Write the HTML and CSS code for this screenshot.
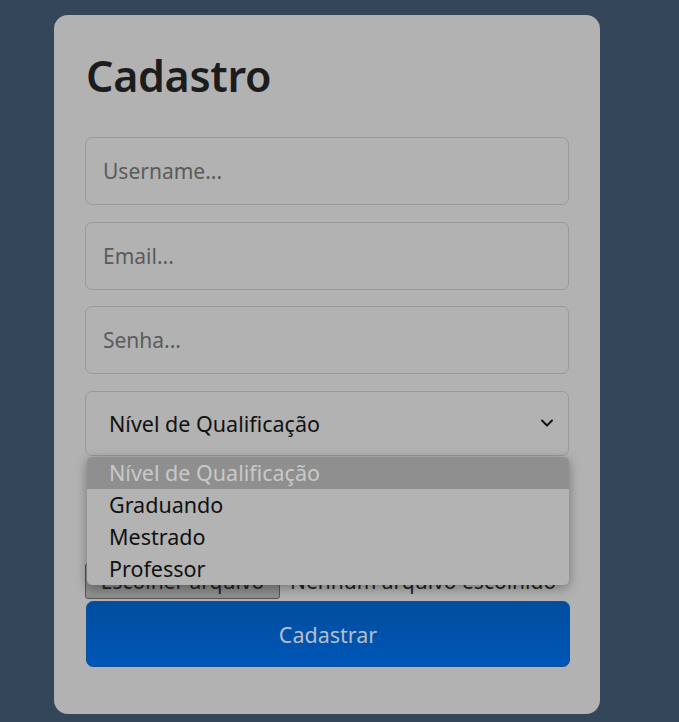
FILE: index.html
```html
<!DOCTYPE html>
<html lang="pt-BR">
<head>
<meta charset="utf-8">
<title>Cadastro</title>
<link rel="stylesheet" href="styles.css">
</head>
<body>
<main class="card">
  <h1 class="title">Cadastro</h1>
  <form class="form">
    <div class="field"><span class="placeholder">Username...</span></div>
    <div class="field"><span class="placeholder">Email...</span></div>
    <div class="field"><span class="placeholder">Senha...</span></div>
    <div class="field select">
      <span class="value">Nível de Qualificação</span>
      <svg class="chevron" width="14" height="10" viewBox="0 0 14 10"><path d="M2 2.5 L7 7.5 L12 2.5" fill="none" stroke="#111" stroke-width="2" stroke-linecap="round" stroke-linejoin="round"/></svg>
    </div>
    <div class="file-row">
      <span class="file-btn">Escolher arquivo</span>
      <span class="file-text">Nenhum arquivo escolhido</span>
    </div>
    <button type="button" class="submit">Cadastrar</button>
  </form>
  <ul class="dropdown">
    <li class="opt disabled">Nível de Qualificação</li>
    <li class="opt">Graduando</li>
    <li class="opt">Mestrado</li>
    <li class="opt">Professor</li>
  </ul>
</main>
</body>
</html>
```

FILE: styles.css
```css
* { box-sizing: border-box; }
html, body { margin: 0; padding: 0; }
body {
  background: #34475a;
  width: 679px;
  height: 722px;
  overflow: hidden;
  font-family: "Noto Sans", "Open Sans", sans-serif;
}
.card {
  position: relative;
  margin: 15px 0 0 54px;
  width: 546px;
  height: 699px;
  background: #b2b2b2;
  border-radius: 14px;
  padding: 31px 31px 0 31px;
}
.title {
  margin: 0 0 17px 1px;
  height: 74px;
  font-size: 43px;
  font-weight: 600;
  line-height: 60px;
  color: #1c1c1c;
  letter-spacing: -0.3px;
}
.form {
  display: flex;
  flex-direction: column;
  gap: 16.5px;
}
.field {
  height: 68px;
  border: 1px solid #999999;
  border-radius: 7px;
  display: flex;
  align-items: center;
  padding: 0 17px;
}
.placeholder {
  font-size: 21px;
  color: #5b5b5b;
}
.select {
  height: 65px;
  padding: 0 14px 0 23px;
  justify-content: space-between;
}
.value {
  font-size: 21.5px;
  color: #111111;
}
.chevron { display: block; }
.file-row {
  margin-top: 91px;
  height: 36px;
  display: flex;
  align-items: center;
  gap: 10px;
  overflow: hidden;
  white-space: nowrap;
}
.file-btn {
  flex: none;
  height: 36px;
  width: 195px;
  border: 1px solid #555;
  border-radius: 3px;
  background: #8e8e8e;
  font-size: 21px;
  display: flex;
  align-items: center;
  justify-content: center;
  color: #222;
}
.file-text { font-size: 21px; color: #222; }
.submit {
  margin-top: -14.5px;
  height: 66px;
  width: 484px;
  margin-left: 1px;
  border: 1px solid #0d4f98;
  border-radius: 7px;
  background: linear-gradient(#004d9e, #0057b8);
  color: #b7bfc8;
  font-family: inherit;
  font-size: 21.5px;
}
.dropdown {
  position: absolute;
  left: 33px;
  top: 442px;
  width: 482px;
  height: 128px;
  margin: 0;
  padding: 0;
  list-style: none;
  background: #b3b3b3;
  border-radius: 5px;
  box-shadow: 0 3px 12px rgba(0,0,0,0.35);
  overflow: hidden;
}
.opt {
  height: 32px;
  line-height: 32px;
  padding-left: 22px;
  font-size: 21.5px;
  color: #111111;
}
.opt.disabled {
  background: #8f8f8f;
  color: #c9c9c9;
}
```
